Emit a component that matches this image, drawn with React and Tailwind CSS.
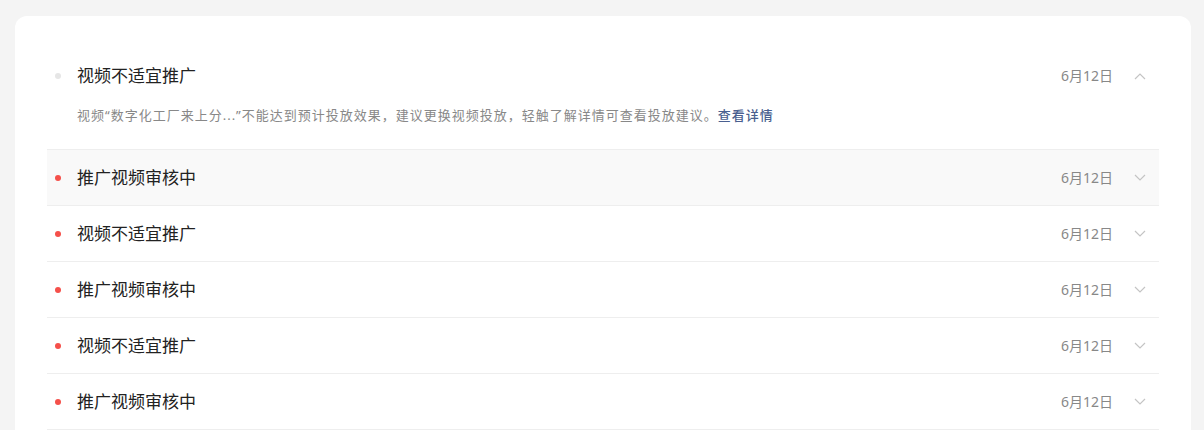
import { useState } from 'react';

const items = [
  { id: 1, title: '视频不适宜推广', date: '6月12日', read: true },
  { id: 2, title: '推广视频审核中', date: '6月12日' },
  { id: 3, title: '视频不适宜推广', date: '6月12日' },
  { id: 4, title: '推广视频审核中', date: '6月12日' },
  { id: 5, title: '视频不适宜推广', date: '6月12日' },
  { id: 6, title: '推广视频审核中', date: '6月12日' },
];

function Chevron({ up }) {
  return (
    <svg width="12" height="8" viewBox="0 0 12 8" fill="none" className="text-[#c4c4c4]">
      {up ? (
        <path d="M1 7L6 2L11 7" stroke="currentColor" strokeWidth="1.2" />
      ) : (
        <path d="M1 1L6 6L11 1" stroke="currentColor" strokeWidth="1.2" />
      )}
    </svg>
  );
}

export default function App() {
  const [open, setOpen] = useState(1);

  return (
    <div
      className="min-h-[430px] bg-[#f4f4f4] pl-[15px] pr-[13px] pt-[16px]"
      style={{ fontFamily: '"Noto Sans", "Noto Sans CJK SC", sans-serif' }}
    >
      <div className="rounded-[12px] bg-white px-[32px] pt-[32px] pb-[16px]">
        {items.map((item, i) => {
          const isOpen = open === item.id;
          return (
            <div
              key={item.id}
              className={`border-b border-[#eeeeee] ${i === 1 ? 'bg-[#f9f9f9]' : ''}`}
            >
              <div
                className="flex h-[55px] cursor-pointer items-center pl-[8px] pr-[13px]"
                onClick={() => setOpen(isOpen ? null : item.id)}
              >
                <span
                  className={`h-[6px] w-[6px] shrink-0 rounded-full ${item.read ? 'bg-[#e6e6e6]' : 'bg-[#f5504a]'}`}
                />
                <span className="ml-[16px] flex-1 text-[17px] leading-[22px] text-[#222222]">
                  {item.title}
                </span>
                <span className="text-[14px] text-[#888888]">{item.date}</span>
                <span className="ml-[21px] flex w-[12px] items-center justify-center">
                  <Chevron up={isOpen} />
                </span>
              </div>
              {isOpen && (
                <p className="mt-[2px] pb-[24px] pl-[30px] text-[13px] leading-[20px] tracking-[1px] text-[#888888]">
                  视频“数字化工厂来上分...”不能达到预计投放效果，建议更换视频投放，轻触了解详情可查看投放建议。
                  <a className="font-medium text-[#4a5f8f]">查看详情</a>
                </p>
              )}
            </div>
          );
        })}
      </div>
    </div>
  );
}
